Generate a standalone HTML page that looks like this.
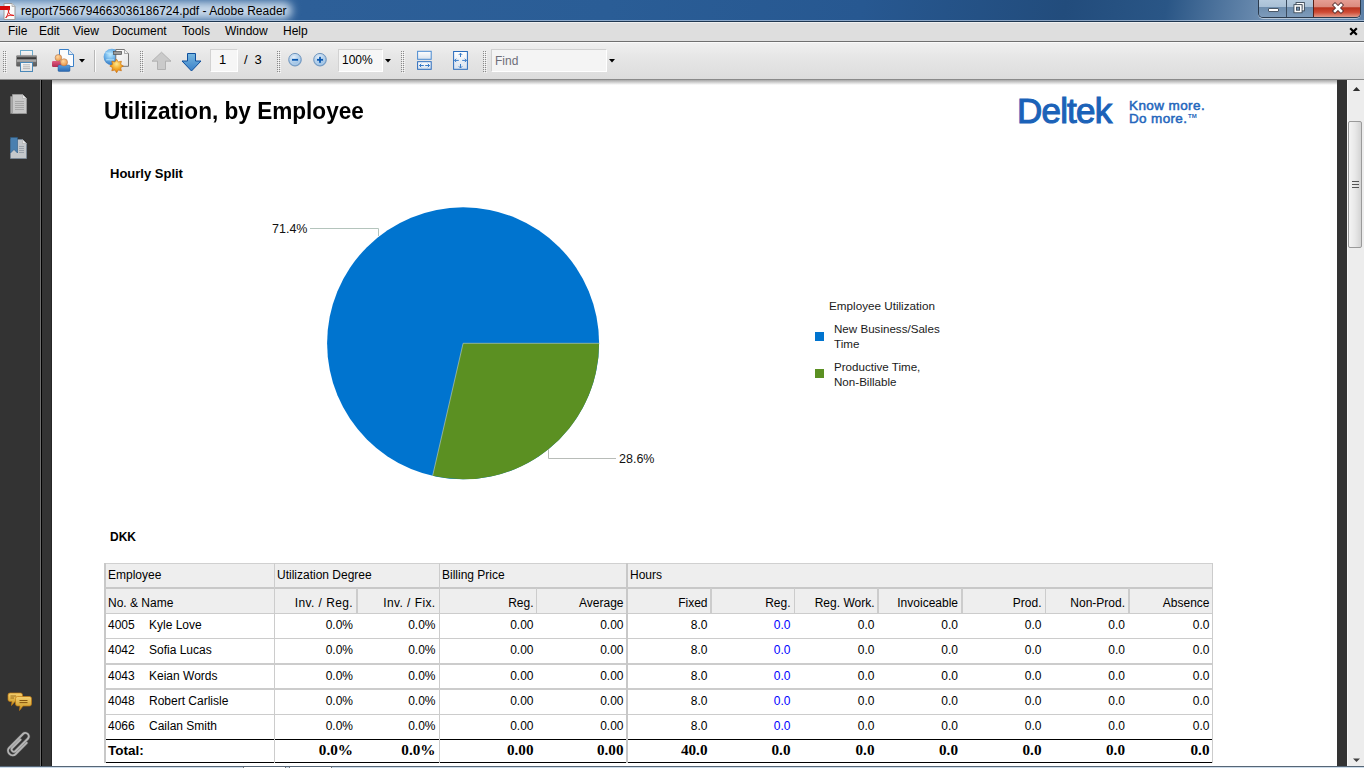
<!DOCTYPE html>
<html><head><meta charset="utf-8">
<style>
*{margin:0;padding:0;box-sizing:border-box}
html,body{width:1364px;height:768px;overflow:hidden;background:#fff;font-family:"Liberation Sans",sans-serif}
.a{position:absolute}
#title{left:0;top:0;width:1364px;height:22px;background:linear-gradient(100deg,#5a86b4 0px,#2d5f98 300px,#2a5d96 600px,#275891 850px,#224c7c 1050px,#2a5686 1150px,#6f8fb2 1250px,#5a7ea6 1364px)}
#menubar{left:0;top:22px;width:1364px;height:20px;background:#dedede;border-top:1px solid #f0f0f0}
#toolbar{left:0;top:42px;width:1364px;height:38px;background:linear-gradient(#f0f0f0,#e6e6e6 40%,#dcdcdc)}
#sidebar{left:0;top:80px;width:52px;height:686px;background:#333}
#page{left:52px;top:80px;width:1285px;height:686px;background:#fff}
#dark2{left:1337px;top:80px;width:10px;height:686px;background:#333}
#vscroll{left:1347px;top:80px;width:17px;height:686px;background:#ededed}
.mi{top:24px;font-size:12px;color:#000}
.t{white-space:nowrap;color:#000}
</style></head><body>
<!-- title bar -->
<div id="title" class="a"></div>
<div class="a" style="left:-20px;top:2px;width:312px;height:17px;background:rgba(212,226,240,0.92);filter:blur(4px);border-radius:8px"></div>
<svg class="a" style="left:0;top:2px" width="16" height="18" viewBox="0 0 16 18">
<path d="M4 1.5 H12 L15 4.5 V17.5 H4 Z" fill="#fafafa" stroke="#9a9a9a" stroke-width="1"/>
<path d="M12 1.5 V4.5 H15" fill="#ddd" stroke="#aaa" stroke-width="0.8"/>
<rect x="0" y="4" width="10" height="4" fill="#d40a0a"/>
<path d="M6 16 C8 12,9 9,9 7 C9 6,8 6,8.3 9 C8.8 12,11 14,14 13.5 C12 12.5,8 13,5.5 15.5" fill="none" stroke="#e02020" stroke-width="1"/>
</svg>
<div class="a t" style="left:21px;top:4px;font-size:12px;">report7566794663036186724.pdf - Adobe Reader</div>
<div class="a" style="left:0;top:20px;width:1364px;height:1px;background:rgba(220,232,245,0.55)"></div><div class="a" style="left:0;top:21px;width:1364px;height:1px;background:#1e3650"></div>
<!-- window buttons -->
<div class="a" style="left:1258px;top:-2px;width:103px;height:20px;border:1px solid #2b3b4e;border-top:none;border-radius:0 0 5px 5px;overflow:hidden;box-shadow:0 1px 0 rgba(255,255,255,0.5)">
 <div class="a" style="left:0;top:0;width:28px;height:19px;background:linear-gradient(#b9cde0 0,#a9c0d6 45%,#6f8eae 50%,#7d9bbb 100%);border-right:1px solid #3a4b5e"></div>
 <div class="a" style="left:28px;top:0;width:26px;height:19px;background:linear-gradient(#b9cde0 0,#a9c0d6 45%,#6f8eae 50%,#7d9bbb 100%)"></div>
 <div class="a" style="left:54px;top:0;width:48px;height:19px;background:linear-gradient(#e8a49a 0,#dc8c7f 45%,#b8341f 52%,#cf4b35 75%,#e09a8a 100%);border-left:1px solid #5a2017"></div>
 <div class="a" style="left:9px;top:10px;width:11px;height:4px;background:#fff;border:1px solid #4a5868;border-radius:1px"></div>
 <svg class="a" style="left:0;top:0" width="54" height="20" viewBox="0 0 54 20">
 <rect x="38.3" y="5.8" width="5.8" height="5.8" fill="none" stroke="#3d4a58" stroke-width="3.4"/>
 <rect x="38.3" y="5.8" width="5.8" height="5.8" fill="none" stroke="#fff" stroke-width="1.6"/>
 <rect x="36.2" y="7.9" width="5.6" height="5.6" fill="#7590ae" stroke="#3d4a58" stroke-width="3.4"/>
 <rect x="36.2" y="7.9" width="5.6" height="5.6" fill="none" stroke="#fff" stroke-width="1.6"/>
 </svg>
 <svg class="a" style="left:71.5px;top:3px" width="14" height="14" viewBox="0 0 14 14"><path d="M4 4 L10 10 M10 4 L4 10" stroke="#5a3434" stroke-width="4.4" stroke-linecap="square"/><path d="M4 4 L10 10 M10 4 L4 10" stroke="#fff" stroke-width="2.6" stroke-linecap="square"/></svg>
</div>
<!-- menu -->
<div id="menubar" class="a"></div>
<div class="a t mi" style="left:8px">File</div>
<div class="a t mi" style="left:39px">Edit</div>
<div class="a t mi" style="left:73px">View</div>
<div class="a t mi" style="left:112px">Document</div>
<div class="a t mi" style="left:182px">Tools</div>
<div class="a t mi" style="left:225px">Window</div>
<div class="a t mi" style="left:283px">Help</div>
<svg class="a" style="left:1349px;top:27px" width="9" height="9" viewBox="0 0 9 9"><path d="M1.2 1.2 L7.8 7.8 M7.8 1.2 L1.2 7.8" stroke="#000" stroke-width="2.2"/></svg>
<!-- toolbar -->
<div id="toolbar" class="a"></div>
<div class="a" style="left:0;top:41px;width:1364px;height:1px;background:#707070"></div><div class="a" style="left:0;top:42px;width:1364px;height:1px;background:#fafafa"></div>
<!-- toolbar items -->

<svg class="a" style="left:14px;top:47px" width="64" height="28" viewBox="14 47 64 28">
 <defs>
  <linearGradient id="pb" x1="0" y1="0" x2="0" y2="1"><stop offset="0" stop-color="#8a8a8a"/><stop offset="1" stop-color="#5a5a5a"/></linearGradient>
  <linearGradient id="pp" x1="0" y1="0" x2="0" y2="1"><stop offset="0" stop-color="#f8f8f8"/><stop offset="1" stop-color="#e0e0e0"/></linearGradient>
  <linearGradient id="bl" x1="0" y1="0" x2="0" y2="1"><stop offset="0" stop-color="#5aa0e0"/><stop offset="1" stop-color="#2a68b0"/></linearGradient>
  <linearGradient id="rd" x1="0" y1="0" x2="0" y2="1"><stop offset="0" stop-color="#e05a80"/><stop offset="1" stop-color="#b02a50"/></linearGradient>
  <radialGradient id="hd" cx="0.4" cy="0.35" r="0.7"><stop offset="0" stop-color="#ffd8a0"/><stop offset="1" stop-color="#e89040"/></radialGradient>
 </defs>
 <rect x="20.5" y="50.5" width="12" height="7" fill="url(#pp)" stroke="#6aa8c8"/>
 <rect x="16.2" y="55.2" width="20.8" height="11.4" rx="1" fill="url(#pb)"/>
 <rect x="17" y="57.3" width="19.2" height="1.8" fill="#3a3a3a"/>
 <rect x="17" y="59.6" width="19.2" height="2.2" fill="#a8a8a8"/>
 <rect x="20.5" y="62.5" width="12" height="9" fill="url(#pp)" stroke="#4a88b8"/>
 <path d="M23 64.8 H30 M23 66.8 H30 M23 68.6 H30" stroke="#b0b0b0" stroke-width="0.9"/>
 <path d="M59.5 49.5 H68.5 L73.5 54.5 V66.5 H59.5 Z" fill="#fbfcfe" stroke="#3a80c8"/>
 <path d="M68.5 49.5 V54.5 H73.5" fill="#dfe8f2" stroke="#3a80c8" stroke-width="0.8"/>
 <rect x="52" y="61" width="9" height="6" rx="1.2" fill="url(#rd)"/>
 <circle cx="58.4" cy="57.8" r="3.3" fill="url(#hd)" stroke="#a87050" stroke-width="0.5"/>
 <rect x="58" y="65" width="12" height="6.5" rx="1.2" fill="url(#bl)" stroke="#2a60a0" stroke-width="0.5"/>
 <circle cx="64" cy="62.3" r="3.6" fill="url(#hd)" stroke="#a87050" stroke-width="0.5"/>
</svg>
<svg class="a" style="left:79px;top:59px" width="6" height="4" viewBox="0 0 6 4"><path d="M0 0 H6 L3 3.5 Z" fill="#000"/></svg>
<div class="a" style="left:94px;top:50px;width:1px;height:22px;background:#b8b8b8"></div>
<div class="a" style="left:95px;top:50px;width:1px;height:22px;background:#fafafa"></div>
<svg class="a" style="left:100px;top:46px" width="32" height="29" viewBox="100 46 32 29">
 <defs>
  <radialGradient id="gl" cx="0.4" cy="0.35" r="0.75"><stop offset="0" stop-color="#c0ecff"/><stop offset="0.45" stop-color="#6ab0e8"/><stop offset="1" stop-color="#1f62b0"/></radialGradient>
  <radialGradient id="st" cx="0.5" cy="0.35" r="0.65"><stop offset="0" stop-color="#ffe890"/><stop offset="0.5" stop-color="#f4b030"/><stop offset="1" stop-color="#e07a08"/></radialGradient>
  <linearGradient id="pg" x1="0" y1="0" x2="1" y2="1"><stop offset="0" stop-color="#ffffff"/><stop offset="1" stop-color="#e4e4e4"/></linearGradient>
 </defs>
 <circle cx="111.8" cy="57" r="8.2" fill="url(#gl)"/>
 <path d="M105.5 53 C108 52,110 55,113 53.5 M106 60 C108.5 58.5,111 61,114 59.5" stroke="#b8e4fa" stroke-width="1.2" fill="none" opacity="0.8"/>
 <path d="M115.8 49.5 H124.5 L128.5 53.5 V66.3 H115.8 Z" fill="url(#pg)" stroke="#6a6a6a" stroke-width="0.9"/>
 <path d="M124.5 49.5 V53.5 H128.5" fill="#f0f0f0" stroke="#8a8a8a" stroke-width="0.7"/>
 <rect x="113.6" y="51.5" width="8" height="3" fill="#9a9a9a" stroke="#505050" stroke-width="0.7"/>
 <path d="M116.60 59.20 L118.28 61.93 L121.41 61.19 L120.67 64.32 L123.40 66.00 L120.67 67.68 L121.41 70.81 L118.28 70.07 L116.60 72.80 L114.92 70.07 L111.79 70.81 L112.53 67.68 L109.80 66.00 L112.53 64.32 L111.79 61.19 L114.92 61.93 Z" fill="url(#st)" stroke="#c86a08" stroke-width="0.6"/>
</svg>

<svg class="a" style="left:151px;top:51px" width="21" height="20" viewBox="0 0 21 20">
 <path d="M10.5 1.2 L20 10.2 H14.5 V18.5 H6.5 V10.2 H1 Z" fill="#cacaca" stroke="#a8a8a8" stroke-width="0.8"/>
</svg>
<svg class="a" style="left:181px;top:52px" width="21" height="21" viewBox="0 0 21 21">
 <defs><linearGradient id="gd" x1="0" y1="0" x2="0" y2="1"><stop offset="0" stop-color="#78b8e0"/><stop offset="1" stop-color="#3a80c8"/></linearGradient></defs>
 <path d="M6.5 1.5 H14.5 V9 H20 L10.5 19 L1 9 H6.5 Z" fill="url(#gd)" stroke="#0e4e9c" stroke-width="1"/>
</svg>
<div class="a" style="left:210px;top:49px;width:28px;height:23px;background:#f6f6f6;border:1px solid #d2d2d2;border-bottom-color:#fff;border-right-color:#fff"></div>
<div class="a t" style="left:219px;top:52px;font-size:13px">1</div>
<div class="a t" style="left:244px;top:52px;font-size:13px">/</div><div class="a t" style="left:254.5px;top:52px;font-size:13px">3</div>

<svg class="a" style="left:286px;top:51px" width="42" height="18" viewBox="0 0 42 18">
 <defs><radialGradient id="gz" cx="0.4" cy="0.3" r="0.8"><stop offset="0" stop-color="#e4f0fa"/><stop offset="1" stop-color="#7aaad8"/></radialGradient></defs>
 <circle cx="9" cy="8.7" r="6.3" fill="url(#gz)" stroke="#7196be" stroke-width="1"/><circle cx="9" cy="8.7" r="4.6" fill="none" stroke="#c8dcf0" stroke-width="0.6"/>
 <rect x="6" y="7.9" width="6" height="1.8" fill="#0a58b0"/>
 <circle cx="34" cy="8.7" r="6.3" fill="url(#gz)" stroke="#7196be" stroke-width="1"/><circle cx="34" cy="8.7" r="4.6" fill="none" stroke="#c8dcf0" stroke-width="0.6"/>
 <rect x="31" y="7.9" width="6" height="1.8" fill="#0a58b0"/>
 <rect x="33.1" y="5.8" width="1.8" height="6" fill="#0a58b0"/>
</svg>
<div class="a" style="left:338px;top:49px;width:45px;height:23px;background:#f6f6f6;border:1px solid #d2d2d2;border-bottom-color:#fff;border-right-color:#fff"></div>
<div class="a t" style="left:342px;top:53px;font-size:12px">100%</div>
<svg class="a" style="left:385px;top:59px" width="6" height="4" viewBox="0 0 6 4"><path d="M0 0 H6 L3 3.5 Z" fill="#000"/></svg>
<svg class="a" style="left:410px;top:46px" width="65" height="28" viewBox="410 46 65 28">
 <defs><linearGradient id="fw" x1="0" y1="0" x2="0" y2="1"><stop offset="0" stop-color="#ffffff"/><stop offset="1" stop-color="#d8e2ee"/></linearGradient></defs>
 <rect x="417.6" y="51.3" width="13.6" height="8" fill="url(#fw)" stroke="#4a8ad0" stroke-width="1"/>
 <rect x="417.6" y="61.7" width="13.6" height="7.6" fill="url(#fw)" stroke="#2a6cbc" stroke-width="1"/>
 <path d="M419.5 65.5 H423.8 M421.2 63.8 L419.5 65.5 L421.2 67.2 M425.2 65.5 H429.5 M427.8 63.8 L429.5 65.5 L427.8 67.2" fill="none" stroke="#3a7cc8" stroke-width="1"/>
 <rect x="453.6" y="51.5" width="13.8" height="17.8" fill="url(#fw)" stroke="#2a6cbc" stroke-width="1"/>
 <path d="M460.5 53.2 V57 M458.8 54.9 L460.5 53.2 L462.2 54.9 M460.5 64 V68 M458.8 66.3 L460.5 68 L462.2 66.3 M454.5 60.4 H458.8 M456.2 58.7 L454.5 60.4 L456.2 62.1 M462.2 60.4 H466.5 M464.8 58.7 L466.5 60.4 L464.8 62.1" fill="none" stroke="#3a7cc8" stroke-width="1"/>
</svg>

<div class="a" style="left:491px;top:49px;width:116px;height:23px;background:#f4f4f4;border:1px solid #d0d0d0;border-bottom-color:#fff;border-right-color:#fff"></div>
<div class="a t" style="left:495px;top:54px;font-size:12px;color:#6e6e78">Find</div>
<svg class="a" style="left:609px;top:59px" width="6" height="4" viewBox="0 0 6 4"><path d="M0 0 H6 L3 3.5 Z" fill="#000"/></svg>
<div class="a" style="left:0;top:79px;width:1364px;height:1px;background:#8a8a8a"></div>
<svg class="a" style="left:0;top:0" width="500" height="80" viewBox="0 0 500 80" shape-rendering="crispEdges"><rect x="4" y="52" width="1" height="1" fill="#fff" opacity="0.7"/><rect x="6" y="52" width="1" height="1" fill="#fff" opacity="0.7"/><rect x="3" y="51" width="1" height="1" fill="#8a8a8a"/><rect x="5" y="51" width="1" height="1" fill="#8a8a8a"/><rect x="4" y="54" width="1" height="1" fill="#fff" opacity="0.7"/><rect x="6" y="54" width="1" height="1" fill="#fff" opacity="0.7"/><rect x="3" y="53" width="1" height="1" fill="#8a8a8a"/><rect x="5" y="53" width="1" height="1" fill="#8a8a8a"/><rect x="4" y="56" width="1" height="1" fill="#fff" opacity="0.7"/><rect x="6" y="56" width="1" height="1" fill="#fff" opacity="0.7"/><rect x="3" y="55" width="1" height="1" fill="#8a8a8a"/><rect x="5" y="55" width="1" height="1" fill="#8a8a8a"/><rect x="4" y="58" width="1" height="1" fill="#fff" opacity="0.7"/><rect x="6" y="58" width="1" height="1" fill="#fff" opacity="0.7"/><rect x="3" y="57" width="1" height="1" fill="#8a8a8a"/><rect x="5" y="57" width="1" height="1" fill="#8a8a8a"/><rect x="4" y="60" width="1" height="1" fill="#fff" opacity="0.7"/><rect x="6" y="60" width="1" height="1" fill="#fff" opacity="0.7"/><rect x="3" y="59" width="1" height="1" fill="#8a8a8a"/><rect x="5" y="59" width="1" height="1" fill="#8a8a8a"/><rect x="4" y="62" width="1" height="1" fill="#fff" opacity="0.7"/><rect x="6" y="62" width="1" height="1" fill="#fff" opacity="0.7"/><rect x="3" y="61" width="1" height="1" fill="#8a8a8a"/><rect x="5" y="61" width="1" height="1" fill="#8a8a8a"/><rect x="4" y="64" width="1" height="1" fill="#fff" opacity="0.7"/><rect x="6" y="64" width="1" height="1" fill="#fff" opacity="0.7"/><rect x="3" y="63" width="1" height="1" fill="#8a8a8a"/><rect x="5" y="63" width="1" height="1" fill="#8a8a8a"/><rect x="4" y="66" width="1" height="1" fill="#fff" opacity="0.7"/><rect x="6" y="66" width="1" height="1" fill="#fff" opacity="0.7"/><rect x="3" y="65" width="1" height="1" fill="#8a8a8a"/><rect x="5" y="65" width="1" height="1" fill="#8a8a8a"/><rect x="4" y="68" width="1" height="1" fill="#fff" opacity="0.7"/><rect x="6" y="68" width="1" height="1" fill="#fff" opacity="0.7"/><rect x="3" y="67" width="1" height="1" fill="#8a8a8a"/><rect x="5" y="67" width="1" height="1" fill="#8a8a8a"/><rect x="4" y="70" width="1" height="1" fill="#fff" opacity="0.7"/><rect x="6" y="70" width="1" height="1" fill="#fff" opacity="0.7"/><rect x="3" y="69" width="1" height="1" fill="#8a8a8a"/><rect x="5" y="69" width="1" height="1" fill="#8a8a8a"/><rect x="4" y="72" width="1" height="1" fill="#fff" opacity="0.7"/><rect x="6" y="72" width="1" height="1" fill="#fff" opacity="0.7"/><rect x="3" y="71" width="1" height="1" fill="#8a8a8a"/><rect x="5" y="71" width="1" height="1" fill="#8a8a8a"/><rect x="141" y="52" width="1" height="1" fill="#fff" opacity="0.7"/><rect x="143" y="52" width="1" height="1" fill="#fff" opacity="0.7"/><rect x="140" y="51" width="1" height="1" fill="#8a8a8a"/><rect x="142" y="51" width="1" height="1" fill="#8a8a8a"/><rect x="141" y="54" width="1" height="1" fill="#fff" opacity="0.7"/><rect x="143" y="54" width="1" height="1" fill="#fff" opacity="0.7"/><rect x="140" y="53" width="1" height="1" fill="#8a8a8a"/><rect x="142" y="53" width="1" height="1" fill="#8a8a8a"/><rect x="141" y="56" width="1" height="1" fill="#fff" opacity="0.7"/><rect x="143" y="56" width="1" height="1" fill="#fff" opacity="0.7"/><rect x="140" y="55" width="1" height="1" fill="#8a8a8a"/><rect x="142" y="55" width="1" height="1" fill="#8a8a8a"/><rect x="141" y="58" width="1" height="1" fill="#fff" opacity="0.7"/><rect x="143" y="58" width="1" height="1" fill="#fff" opacity="0.7"/><rect x="140" y="57" width="1" height="1" fill="#8a8a8a"/><rect x="142" y="57" width="1" height="1" fill="#8a8a8a"/><rect x="141" y="60" width="1" height="1" fill="#fff" opacity="0.7"/><rect x="143" y="60" width="1" height="1" fill="#fff" opacity="0.7"/><rect x="140" y="59" width="1" height="1" fill="#8a8a8a"/><rect x="142" y="59" width="1" height="1" fill="#8a8a8a"/><rect x="141" y="62" width="1" height="1" fill="#fff" opacity="0.7"/><rect x="143" y="62" width="1" height="1" fill="#fff" opacity="0.7"/><rect x="140" y="61" width="1" height="1" fill="#8a8a8a"/><rect x="142" y="61" width="1" height="1" fill="#8a8a8a"/><rect x="141" y="64" width="1" height="1" fill="#fff" opacity="0.7"/><rect x="143" y="64" width="1" height="1" fill="#fff" opacity="0.7"/><rect x="140" y="63" width="1" height="1" fill="#8a8a8a"/><rect x="142" y="63" width="1" height="1" fill="#8a8a8a"/><rect x="141" y="66" width="1" height="1" fill="#fff" opacity="0.7"/><rect x="143" y="66" width="1" height="1" fill="#fff" opacity="0.7"/><rect x="140" y="65" width="1" height="1" fill="#8a8a8a"/><rect x="142" y="65" width="1" height="1" fill="#8a8a8a"/><rect x="141" y="68" width="1" height="1" fill="#fff" opacity="0.7"/><rect x="143" y="68" width="1" height="1" fill="#fff" opacity="0.7"/><rect x="140" y="67" width="1" height="1" fill="#8a8a8a"/><rect x="142" y="67" width="1" height="1" fill="#8a8a8a"/><rect x="141" y="70" width="1" height="1" fill="#fff" opacity="0.7"/><rect x="143" y="70" width="1" height="1" fill="#fff" opacity="0.7"/><rect x="140" y="69" width="1" height="1" fill="#8a8a8a"/><rect x="142" y="69" width="1" height="1" fill="#8a8a8a"/><rect x="141" y="72" width="1" height="1" fill="#fff" opacity="0.7"/><rect x="143" y="72" width="1" height="1" fill="#fff" opacity="0.7"/><rect x="140" y="71" width="1" height="1" fill="#8a8a8a"/><rect x="142" y="71" width="1" height="1" fill="#8a8a8a"/><rect x="278" y="52" width="1" height="1" fill="#fff" opacity="0.7"/><rect x="280" y="52" width="1" height="1" fill="#fff" opacity="0.7"/><rect x="277" y="51" width="1" height="1" fill="#8a8a8a"/><rect x="279" y="51" width="1" height="1" fill="#8a8a8a"/><rect x="278" y="54" width="1" height="1" fill="#fff" opacity="0.7"/><rect x="280" y="54" width="1" height="1" fill="#fff" opacity="0.7"/><rect x="277" y="53" width="1" height="1" fill="#8a8a8a"/><rect x="279" y="53" width="1" height="1" fill="#8a8a8a"/><rect x="278" y="56" width="1" height="1" fill="#fff" opacity="0.7"/><rect x="280" y="56" width="1" height="1" fill="#fff" opacity="0.7"/><rect x="277" y="55" width="1" height="1" fill="#8a8a8a"/><rect x="279" y="55" width="1" height="1" fill="#8a8a8a"/><rect x="278" y="58" width="1" height="1" fill="#fff" opacity="0.7"/><rect x="280" y="58" width="1" height="1" fill="#fff" opacity="0.7"/><rect x="277" y="57" width="1" height="1" fill="#8a8a8a"/><rect x="279" y="57" width="1" height="1" fill="#8a8a8a"/><rect x="278" y="60" width="1" height="1" fill="#fff" opacity="0.7"/><rect x="280" y="60" width="1" height="1" fill="#fff" opacity="0.7"/><rect x="277" y="59" width="1" height="1" fill="#8a8a8a"/><rect x="279" y="59" width="1" height="1" fill="#8a8a8a"/><rect x="278" y="62" width="1" height="1" fill="#fff" opacity="0.7"/><rect x="280" y="62" width="1" height="1" fill="#fff" opacity="0.7"/><rect x="277" y="61" width="1" height="1" fill="#8a8a8a"/><rect x="279" y="61" width="1" height="1" fill="#8a8a8a"/><rect x="278" y="64" width="1" height="1" fill="#fff" opacity="0.7"/><rect x="280" y="64" width="1" height="1" fill="#fff" opacity="0.7"/><rect x="277" y="63" width="1" height="1" fill="#8a8a8a"/><rect x="279" y="63" width="1" height="1" fill="#8a8a8a"/><rect x="278" y="66" width="1" height="1" fill="#fff" opacity="0.7"/><rect x="280" y="66" width="1" height="1" fill="#fff" opacity="0.7"/><rect x="277" y="65" width="1" height="1" fill="#8a8a8a"/><rect x="279" y="65" width="1" height="1" fill="#8a8a8a"/><rect x="278" y="68" width="1" height="1" fill="#fff" opacity="0.7"/><rect x="280" y="68" width="1" height="1" fill="#fff" opacity="0.7"/><rect x="277" y="67" width="1" height="1" fill="#8a8a8a"/><rect x="279" y="67" width="1" height="1" fill="#8a8a8a"/><rect x="278" y="70" width="1" height="1" fill="#fff" opacity="0.7"/><rect x="280" y="70" width="1" height="1" fill="#fff" opacity="0.7"/><rect x="277" y="69" width="1" height="1" fill="#8a8a8a"/><rect x="279" y="69" width="1" height="1" fill="#8a8a8a"/><rect x="278" y="72" width="1" height="1" fill="#fff" opacity="0.7"/><rect x="280" y="72" width="1" height="1" fill="#fff" opacity="0.7"/><rect x="277" y="71" width="1" height="1" fill="#8a8a8a"/><rect x="279" y="71" width="1" height="1" fill="#8a8a8a"/><rect x="402" y="52" width="1" height="1" fill="#fff" opacity="0.7"/><rect x="404" y="52" width="1" height="1" fill="#fff" opacity="0.7"/><rect x="401" y="51" width="1" height="1" fill="#8a8a8a"/><rect x="403" y="51" width="1" height="1" fill="#8a8a8a"/><rect x="402" y="54" width="1" height="1" fill="#fff" opacity="0.7"/><rect x="404" y="54" width="1" height="1" fill="#fff" opacity="0.7"/><rect x="401" y="53" width="1" height="1" fill="#8a8a8a"/><rect x="403" y="53" width="1" height="1" fill="#8a8a8a"/><rect x="402" y="56" width="1" height="1" fill="#fff" opacity="0.7"/><rect x="404" y="56" width="1" height="1" fill="#fff" opacity="0.7"/><rect x="401" y="55" width="1" height="1" fill="#8a8a8a"/><rect x="403" y="55" width="1" height="1" fill="#8a8a8a"/><rect x="402" y="58" width="1" height="1" fill="#fff" opacity="0.7"/><rect x="404" y="58" width="1" height="1" fill="#fff" opacity="0.7"/><rect x="401" y="57" width="1" height="1" fill="#8a8a8a"/><rect x="403" y="57" width="1" height="1" fill="#8a8a8a"/><rect x="402" y="60" width="1" height="1" fill="#fff" opacity="0.7"/><rect x="404" y="60" width="1" height="1" fill="#fff" opacity="0.7"/><rect x="401" y="59" width="1" height="1" fill="#8a8a8a"/><rect x="403" y="59" width="1" height="1" fill="#8a8a8a"/><rect x="402" y="62" width="1" height="1" fill="#fff" opacity="0.7"/><rect x="404" y="62" width="1" height="1" fill="#fff" opacity="0.7"/><rect x="401" y="61" width="1" height="1" fill="#8a8a8a"/><rect x="403" y="61" width="1" height="1" fill="#8a8a8a"/><rect x="402" y="64" width="1" height="1" fill="#fff" opacity="0.7"/><rect x="404" y="64" width="1" height="1" fill="#fff" opacity="0.7"/><rect x="401" y="63" width="1" height="1" fill="#8a8a8a"/><rect x="403" y="63" width="1" height="1" fill="#8a8a8a"/><rect x="402" y="66" width="1" height="1" fill="#fff" opacity="0.7"/><rect x="404" y="66" width="1" height="1" fill="#fff" opacity="0.7"/><rect x="401" y="65" width="1" height="1" fill="#8a8a8a"/><rect x="403" y="65" width="1" height="1" fill="#8a8a8a"/><rect x="402" y="68" width="1" height="1" fill="#fff" opacity="0.7"/><rect x="404" y="68" width="1" height="1" fill="#fff" opacity="0.7"/><rect x="401" y="67" width="1" height="1" fill="#8a8a8a"/><rect x="403" y="67" width="1" height="1" fill="#8a8a8a"/><rect x="402" y="70" width="1" height="1" fill="#fff" opacity="0.7"/><rect x="404" y="70" width="1" height="1" fill="#fff" opacity="0.7"/><rect x="401" y="69" width="1" height="1" fill="#8a8a8a"/><rect x="403" y="69" width="1" height="1" fill="#8a8a8a"/><rect x="402" y="72" width="1" height="1" fill="#fff" opacity="0.7"/><rect x="404" y="72" width="1" height="1" fill="#fff" opacity="0.7"/><rect x="401" y="71" width="1" height="1" fill="#8a8a8a"/><rect x="403" y="71" width="1" height="1" fill="#8a8a8a"/><rect x="484" y="52" width="1" height="1" fill="#fff" opacity="0.7"/><rect x="486" y="52" width="1" height="1" fill="#fff" opacity="0.7"/><rect x="483" y="51" width="1" height="1" fill="#8a8a8a"/><rect x="485" y="51" width="1" height="1" fill="#8a8a8a"/><rect x="484" y="54" width="1" height="1" fill="#fff" opacity="0.7"/><rect x="486" y="54" width="1" height="1" fill="#fff" opacity="0.7"/><rect x="483" y="53" width="1" height="1" fill="#8a8a8a"/><rect x="485" y="53" width="1" height="1" fill="#8a8a8a"/><rect x="484" y="56" width="1" height="1" fill="#fff" opacity="0.7"/><rect x="486" y="56" width="1" height="1" fill="#fff" opacity="0.7"/><rect x="483" y="55" width="1" height="1" fill="#8a8a8a"/><rect x="485" y="55" width="1" height="1" fill="#8a8a8a"/><rect x="484" y="58" width="1" height="1" fill="#fff" opacity="0.7"/><rect x="486" y="58" width="1" height="1" fill="#fff" opacity="0.7"/><rect x="483" y="57" width="1" height="1" fill="#8a8a8a"/><rect x="485" y="57" width="1" height="1" fill="#8a8a8a"/><rect x="484" y="60" width="1" height="1" fill="#fff" opacity="0.7"/><rect x="486" y="60" width="1" height="1" fill="#fff" opacity="0.7"/><rect x="483" y="59" width="1" height="1" fill="#8a8a8a"/><rect x="485" y="59" width="1" height="1" fill="#8a8a8a"/><rect x="484" y="62" width="1" height="1" fill="#fff" opacity="0.7"/><rect x="486" y="62" width="1" height="1" fill="#fff" opacity="0.7"/><rect x="483" y="61" width="1" height="1" fill="#8a8a8a"/><rect x="485" y="61" width="1" height="1" fill="#8a8a8a"/><rect x="484" y="64" width="1" height="1" fill="#fff" opacity="0.7"/><rect x="486" y="64" width="1" height="1" fill="#fff" opacity="0.7"/><rect x="483" y="63" width="1" height="1" fill="#8a8a8a"/><rect x="485" y="63" width="1" height="1" fill="#8a8a8a"/><rect x="484" y="66" width="1" height="1" fill="#fff" opacity="0.7"/><rect x="486" y="66" width="1" height="1" fill="#fff" opacity="0.7"/><rect x="483" y="65" width="1" height="1" fill="#8a8a8a"/><rect x="485" y="65" width="1" height="1" fill="#8a8a8a"/><rect x="484" y="68" width="1" height="1" fill="#fff" opacity="0.7"/><rect x="486" y="68" width="1" height="1" fill="#fff" opacity="0.7"/><rect x="483" y="67" width="1" height="1" fill="#8a8a8a"/><rect x="485" y="67" width="1" height="1" fill="#8a8a8a"/><rect x="484" y="70" width="1" height="1" fill="#fff" opacity="0.7"/><rect x="486" y="70" width="1" height="1" fill="#fff" opacity="0.7"/><rect x="483" y="69" width="1" height="1" fill="#8a8a8a"/><rect x="485" y="69" width="1" height="1" fill="#8a8a8a"/><rect x="484" y="72" width="1" height="1" fill="#fff" opacity="0.7"/><rect x="486" y="72" width="1" height="1" fill="#fff" opacity="0.7"/><rect x="483" y="71" width="1" height="1" fill="#8a8a8a"/><rect x="485" y="71" width="1" height="1" fill="#8a8a8a"/></svg>
<!-- content -->
<div id="sidebar" class="a"></div>
<div id="page" class="a"></div>
<div id="dark2" class="a"></div>
<div id="vscroll" class="a"></div>

<!-- PAGE CONTENT -->
<div class="a t" style="left:104px;top:101.37px;font-size:22.6px;line-height:22.6px;font-weight:bold;font-family:'Liberation Sans',sans-serif;color:#000;transform:scaleY(1.07);transform-origin:0 19px;">Utilization, by Employee</div>
<div class="a t" style="left:1017px;top:92.87px;font-size:35px;line-height:35px;font-weight:normal;font-family:'Liberation Sans',sans-serif;color:#1b62b8;letter-spacing:-0.8px;-webkit-text-stroke:1.1px #1b62b8;">Deltek</div>
<div class="a t" style="left:1129px;top:98.57px;font-size:13.5px;line-height:13.5px;font-weight:normal;font-family:'Liberation Sans',sans-serif;color:#2366bc;letter-spacing:0.4px;-webkit-text-stroke:0.5px #2366bc;">Know more.</div>
<div class="a t" style="left:1129px;top:111.97px;font-size:13.5px;line-height:13.5px;font-weight:normal;font-family:'Liberation Sans',sans-serif;color:#2366bc;letter-spacing:0.35px;-webkit-text-stroke:0.5px #2366bc;">Do more.</div>
<div class="a t" style="left:1188px;top:112.92px;font-size:6px;line-height:6px;font-weight:bold;font-family:'Liberation Sans',sans-serif;color:#2366bc;">TM</div>
<div class="a t" style="left:110px;top:167.0px;font-size:13px;line-height:13px;font-weight:bold;font-family:'Liberation Sans',sans-serif;color:#000;">Hourly Split</div>
<svg class="a" style="left:0;top:0" width="1364" height="768" viewBox="0 0 1364 768">
<circle cx="463.1" cy="343.3" r="136" fill="#0074cf"/>
<path d="M463.1 343.3 L599.1 343.3 A136 136 0 0 1 432.60 475.84 Z" fill="#5b9022"/>
<path d="M599.1 343.3 L463.1 343.3 L432.60 475.84" fill="none" stroke="#c8d0c0" stroke-width="0.6"/>
<path d="M310 228.5 H378.5 V236" fill="none" stroke="#b4c4bc" stroke-width="1"/>
<path d="M548.5 449 V458.5 H616" fill="none" stroke="#b8bcb8" stroke-width="1"/>
</svg>
<div class="a t" style="left:272px;top:223.42px;font-size:12.5px;line-height:12.5px;font-weight:normal;font-family:'Liberation Sans',sans-serif;color:#111;">71.4%</div>
<div class="a t" style="left:619px;top:453.42px;font-size:12.5px;line-height:12.5px;font-weight:normal;font-family:'Liberation Sans',sans-serif;color:#111;">28.6%</div>
<div class="a t" style="left:829px;top:300.1px;font-size:11.7px;line-height:11.7px;font-weight:normal;font-family:'Liberation Sans',sans-serif;color:#1a1a1a;">Employee Utilization</div>
<div class="a" style="left:815px;top:332px;width:9px;height:9px;background:#0074cf"></div>
<div class="a t" style="left:834px;top:323.18px;font-size:11.6px;line-height:11.6px;font-weight:normal;font-family:'Liberation Sans',sans-serif;color:#1a1a1a;">New Business/Sales</div>
<div class="a t" style="left:834px;top:338.18px;font-size:11.6px;line-height:11.6px;font-weight:normal;font-family:'Liberation Sans',sans-serif;color:#1a1a1a;">Time</div>
<div class="a" style="left:815px;top:369px;width:9px;height:9px;background:#5b9022"></div>
<div class="a t" style="left:834px;top:360.68px;font-size:11.6px;line-height:11.6px;font-weight:normal;font-family:'Liberation Sans',sans-serif;color:#1a1a1a;">Productive Time,</div>
<div class="a t" style="left:834px;top:375.68px;font-size:11.6px;line-height:11.6px;font-weight:normal;font-family:'Liberation Sans',sans-serif;color:#1a1a1a;">Non-Billable</div>
<div class="a t" style="left:110px;top:530.84px;font-size:12px;line-height:12px;font-weight:bold;font-family:'Liberation Sans',sans-serif;color:#000;">DKK</div>
<div class="a" style="left:104px;top:563px;width:1108px;height:50px;background:#eeeeee"></div>
<div class="a" style="left:104px;top:563px;width:1108px;height:1px;background:#d0d0d0"></div>
<div class="a" style="left:104px;top:587px;width:1108px;height:2px;background:#c8c8c8"></div>
<div class="a" style="left:104px;top:613px;width:1108px;height:1px;background:#cccccc"></div>
<div class="a" style="left:104px;top:638px;width:1108px;height:1px;background:#cccccc"></div>
<div class="a" style="left:104px;top:663px;width:1108px;height:2px;background:#cccccc"></div>
<div class="a" style="left:104px;top:688px;width:1108px;height:2px;background:#cccccc"></div>
<div class="a" style="left:104px;top:714px;width:1108px;height:1px;background:#cccccc"></div>
<div class="a" style="left:104px;top:739px;width:1108px;height:1px;background:#000"></div>
<div class="a" style="left:104px;top:762px;width:1108px;height:1px;background:#000"></div>
<div class="a" style="left:104px;top:563px;width:2px;height:200px;background:#c8c8c8"></div>
<div class="a" style="left:1212px;top:563px;width:1px;height:200px;background:#cccccc"></div>
<div class="a" style="left:274px;top:563px;width:1px;height:200px;background:#cccccc"></div>
<div class="a" style="left:439px;top:563px;width:1px;height:200px;background:#cccccc"></div>
<div class="a" style="left:626px;top:563px;width:2px;height:200px;background:#c8c8c8"></div>
<div class="a" style="left:356px;top:588px;width:2px;height:25px;background:#cccccc"></div>
<div class="a" style="left:536px;top:588px;width:1px;height:25px;background:#cccccc"></div>
<div class="a" style="left:710px;top:588px;width:2px;height:25px;background:#cccccc"></div>
<div class="a" style="left:794px;top:588px;width:1px;height:25px;background:#cccccc"></div>
<div class="a" style="left:877px;top:588px;width:2px;height:25px;background:#cccccc"></div>
<div class="a" style="left:961px;top:588px;width:2px;height:25px;background:#cccccc"></div>
<div class="a" style="left:1045px;top:588px;width:1px;height:25px;background:#cccccc"></div>
<div class="a" style="left:1128px;top:588px;width:2px;height:25px;background:#cccccc"></div>
<div class="a t" style="left:108px;top:568.84px;font-size:12px;line-height:12px;font-weight:normal;font-family:'Liberation Sans',sans-serif;color:#000;">Employee</div>
<div class="a t" style="left:277px;top:568.84px;font-size:12px;line-height:12px;font-weight:normal;font-family:'Liberation Sans',sans-serif;color:#000;">Utilization Degree</div>
<div class="a t" style="left:442px;top:568.84px;font-size:12px;line-height:12px;font-weight:normal;font-family:'Liberation Sans',sans-serif;color:#000;">Billing Price</div>
<div class="a t" style="left:630px;top:568.84px;font-size:12px;line-height:12px;font-weight:normal;font-family:'Liberation Sans',sans-serif;color:#000;">Hours</div>
<div class="a t" style="left:108px;top:596.84px;font-size:12px;line-height:12px;font-weight:normal;font-family:'Liberation Sans',sans-serif;color:#000;">No. &amp; Name</div>
<div class="a t" style="left:-47px;width:400px;text-align:right;top:596.84px;font-size:12px;line-height:12px;font-weight:normal;font-family:'Liberation Sans',sans-serif;color:#000;word-spacing:0.3px;letter-spacing:0.35px;margin-right:-0.5px;">Inv. / Reg.</div>
<div class="a t" style="left:35.5px;width:400px;text-align:right;top:596.84px;font-size:12px;line-height:12px;font-weight:normal;font-family:'Liberation Sans',sans-serif;color:#000;word-spacing:0.3px;letter-spacing:0.35px;margin-right:-0.5px;">Inv. / Fix.</div>
<div class="a t" style="left:133.5px;width:400px;text-align:right;top:596.84px;font-size:12px;line-height:12px;font-weight:normal;font-family:'Liberation Sans',sans-serif;color:#000;">Reg.</div>
<div class="a t" style="left:223.5px;width:400px;text-align:right;top:596.84px;font-size:12px;line-height:12px;font-weight:normal;font-family:'Liberation Sans',sans-serif;color:#000;">Average</div>
<div class="a t" style="left:307.5px;width:400px;text-align:right;top:596.84px;font-size:12px;line-height:12px;font-weight:normal;font-family:'Liberation Sans',sans-serif;color:#000;">Fixed</div>
<div class="a t" style="left:390.5px;width:400px;text-align:right;top:596.84px;font-size:12px;line-height:12px;font-weight:normal;font-family:'Liberation Sans',sans-serif;color:#000;">Reg.</div>
<div class="a t" style="left:474.5px;width:400px;text-align:right;top:596.84px;font-size:12px;line-height:12px;font-weight:normal;font-family:'Liberation Sans',sans-serif;color:#000;">Reg. Work.</div>
<div class="a t" style="left:558px;width:400px;text-align:right;top:596.84px;font-size:12px;line-height:12px;font-weight:normal;font-family:'Liberation Sans',sans-serif;color:#000;">Invoiceable</div>
<div class="a t" style="left:641.5px;width:400px;text-align:right;top:596.84px;font-size:12px;line-height:12px;font-weight:normal;font-family:'Liberation Sans',sans-serif;color:#000;">Prod.</div>
<div class="a t" style="left:725px;width:400px;text-align:right;top:596.84px;font-size:12px;line-height:12px;font-weight:normal;font-family:'Liberation Sans',sans-serif;color:#000;">Non-Prod.</div>
<div class="a t" style="left:809.5px;width:400px;text-align:right;top:596.84px;font-size:12px;line-height:12px;font-weight:normal;font-family:'Liberation Sans',sans-serif;color:#000;">Absence</div>
<div class="a t" style="left:108px;top:618.84px;font-size:12px;line-height:12px;font-weight:normal;font-family:'Liberation Sans',sans-serif;color:#000;">4005</div>
<div class="a t" style="left:149px;top:618.84px;font-size:12px;line-height:12px;font-weight:normal;font-family:'Liberation Sans',sans-serif;color:#000;">Kyle Love</div>
<div class="a t" style="left:-47px;width:400px;text-align:right;top:618.84px;font-size:12px;line-height:12px;font-weight:normal;font-family:'Liberation Sans',sans-serif;color:#000;">0.0%</div>
<div class="a t" style="left:35.5px;width:400px;text-align:right;top:618.84px;font-size:12px;line-height:12px;font-weight:normal;font-family:'Liberation Sans',sans-serif;color:#000;">0.0%</div>
<div class="a t" style="left:133.5px;width:400px;text-align:right;top:618.84px;font-size:12px;line-height:12px;font-weight:normal;font-family:'Liberation Sans',sans-serif;color:#000;">0.00</div>
<div class="a t" style="left:223.5px;width:400px;text-align:right;top:618.84px;font-size:12px;line-height:12px;font-weight:normal;font-family:'Liberation Sans',sans-serif;color:#000;">0.00</div>
<div class="a t" style="left:307.5px;width:400px;text-align:right;top:618.84px;font-size:12px;line-height:12px;font-weight:normal;font-family:'Liberation Sans',sans-serif;color:#000;">8.0</div>
<div class="a t" style="left:390.5px;width:400px;text-align:right;top:618.84px;font-size:12px;line-height:12px;font-weight:normal;font-family:'Liberation Sans',sans-serif;color:#0000ff;">0.0</div>
<div class="a t" style="left:474.5px;width:400px;text-align:right;top:618.84px;font-size:12px;line-height:12px;font-weight:normal;font-family:'Liberation Sans',sans-serif;color:#000;">0.0</div>
<div class="a t" style="left:558px;width:400px;text-align:right;top:618.84px;font-size:12px;line-height:12px;font-weight:normal;font-family:'Liberation Sans',sans-serif;color:#000;">0.0</div>
<div class="a t" style="left:641.5px;width:400px;text-align:right;top:618.84px;font-size:12px;line-height:12px;font-weight:normal;font-family:'Liberation Sans',sans-serif;color:#000;">0.0</div>
<div class="a t" style="left:725px;width:400px;text-align:right;top:618.84px;font-size:12px;line-height:12px;font-weight:normal;font-family:'Liberation Sans',sans-serif;color:#000;">0.0</div>
<div class="a t" style="left:809.5px;width:400px;text-align:right;top:618.84px;font-size:12px;line-height:12px;font-weight:normal;font-family:'Liberation Sans',sans-serif;color:#000;">0.0</div>
<div class="a t" style="left:108px;top:643.84px;font-size:12px;line-height:12px;font-weight:normal;font-family:'Liberation Sans',sans-serif;color:#000;">4042</div>
<div class="a t" style="left:149px;top:643.84px;font-size:12px;line-height:12px;font-weight:normal;font-family:'Liberation Sans',sans-serif;color:#000;">Sofia Lucas</div>
<div class="a t" style="left:-47px;width:400px;text-align:right;top:643.84px;font-size:12px;line-height:12px;font-weight:normal;font-family:'Liberation Sans',sans-serif;color:#000;">0.0%</div>
<div class="a t" style="left:35.5px;width:400px;text-align:right;top:643.84px;font-size:12px;line-height:12px;font-weight:normal;font-family:'Liberation Sans',sans-serif;color:#000;">0.0%</div>
<div class="a t" style="left:133.5px;width:400px;text-align:right;top:643.84px;font-size:12px;line-height:12px;font-weight:normal;font-family:'Liberation Sans',sans-serif;color:#000;">0.00</div>
<div class="a t" style="left:223.5px;width:400px;text-align:right;top:643.84px;font-size:12px;line-height:12px;font-weight:normal;font-family:'Liberation Sans',sans-serif;color:#000;">0.00</div>
<div class="a t" style="left:307.5px;width:400px;text-align:right;top:643.84px;font-size:12px;line-height:12px;font-weight:normal;font-family:'Liberation Sans',sans-serif;color:#000;">8.0</div>
<div class="a t" style="left:390.5px;width:400px;text-align:right;top:643.84px;font-size:12px;line-height:12px;font-weight:normal;font-family:'Liberation Sans',sans-serif;color:#0000ff;">0.0</div>
<div class="a t" style="left:474.5px;width:400px;text-align:right;top:643.84px;font-size:12px;line-height:12px;font-weight:normal;font-family:'Liberation Sans',sans-serif;color:#000;">0.0</div>
<div class="a t" style="left:558px;width:400px;text-align:right;top:643.84px;font-size:12px;line-height:12px;font-weight:normal;font-family:'Liberation Sans',sans-serif;color:#000;">0.0</div>
<div class="a t" style="left:641.5px;width:400px;text-align:right;top:643.84px;font-size:12px;line-height:12px;font-weight:normal;font-family:'Liberation Sans',sans-serif;color:#000;">0.0</div>
<div class="a t" style="left:725px;width:400px;text-align:right;top:643.84px;font-size:12px;line-height:12px;font-weight:normal;font-family:'Liberation Sans',sans-serif;color:#000;">0.0</div>
<div class="a t" style="left:809.5px;width:400px;text-align:right;top:643.84px;font-size:12px;line-height:12px;font-weight:normal;font-family:'Liberation Sans',sans-serif;color:#000;">0.0</div>
<div class="a t" style="left:108px;top:669.84px;font-size:12px;line-height:12px;font-weight:normal;font-family:'Liberation Sans',sans-serif;color:#000;">4043</div>
<div class="a t" style="left:149px;top:669.84px;font-size:12px;line-height:12px;font-weight:normal;font-family:'Liberation Sans',sans-serif;color:#000;">Keian Words</div>
<div class="a t" style="left:-47px;width:400px;text-align:right;top:669.84px;font-size:12px;line-height:12px;font-weight:normal;font-family:'Liberation Sans',sans-serif;color:#000;">0.0%</div>
<div class="a t" style="left:35.5px;width:400px;text-align:right;top:669.84px;font-size:12px;line-height:12px;font-weight:normal;font-family:'Liberation Sans',sans-serif;color:#000;">0.0%</div>
<div class="a t" style="left:133.5px;width:400px;text-align:right;top:669.84px;font-size:12px;line-height:12px;font-weight:normal;font-family:'Liberation Sans',sans-serif;color:#000;">0.00</div>
<div class="a t" style="left:223.5px;width:400px;text-align:right;top:669.84px;font-size:12px;line-height:12px;font-weight:normal;font-family:'Liberation Sans',sans-serif;color:#000;">0.00</div>
<div class="a t" style="left:307.5px;width:400px;text-align:right;top:669.84px;font-size:12px;line-height:12px;font-weight:normal;font-family:'Liberation Sans',sans-serif;color:#000;">8.0</div>
<div class="a t" style="left:390.5px;width:400px;text-align:right;top:669.84px;font-size:12px;line-height:12px;font-weight:normal;font-family:'Liberation Sans',sans-serif;color:#0000ff;">0.0</div>
<div class="a t" style="left:474.5px;width:400px;text-align:right;top:669.84px;font-size:12px;line-height:12px;font-weight:normal;font-family:'Liberation Sans',sans-serif;color:#000;">0.0</div>
<div class="a t" style="left:558px;width:400px;text-align:right;top:669.84px;font-size:12px;line-height:12px;font-weight:normal;font-family:'Liberation Sans',sans-serif;color:#000;">0.0</div>
<div class="a t" style="left:641.5px;width:400px;text-align:right;top:669.84px;font-size:12px;line-height:12px;font-weight:normal;font-family:'Liberation Sans',sans-serif;color:#000;">0.0</div>
<div class="a t" style="left:725px;width:400px;text-align:right;top:669.84px;font-size:12px;line-height:12px;font-weight:normal;font-family:'Liberation Sans',sans-serif;color:#000;">0.0</div>
<div class="a t" style="left:809.5px;width:400px;text-align:right;top:669.84px;font-size:12px;line-height:12px;font-weight:normal;font-family:'Liberation Sans',sans-serif;color:#000;">0.0</div>
<div class="a t" style="left:108px;top:694.84px;font-size:12px;line-height:12px;font-weight:normal;font-family:'Liberation Sans',sans-serif;color:#000;">4048</div>
<div class="a t" style="left:149px;top:694.84px;font-size:12px;line-height:12px;font-weight:normal;font-family:'Liberation Sans',sans-serif;color:#000;">Robert Carlisle</div>
<div class="a t" style="left:-47px;width:400px;text-align:right;top:694.84px;font-size:12px;line-height:12px;font-weight:normal;font-family:'Liberation Sans',sans-serif;color:#000;">0.0%</div>
<div class="a t" style="left:35.5px;width:400px;text-align:right;top:694.84px;font-size:12px;line-height:12px;font-weight:normal;font-family:'Liberation Sans',sans-serif;color:#000;">0.0%</div>
<div class="a t" style="left:133.5px;width:400px;text-align:right;top:694.84px;font-size:12px;line-height:12px;font-weight:normal;font-family:'Liberation Sans',sans-serif;color:#000;">0.00</div>
<div class="a t" style="left:223.5px;width:400px;text-align:right;top:694.84px;font-size:12px;line-height:12px;font-weight:normal;font-family:'Liberation Sans',sans-serif;color:#000;">0.00</div>
<div class="a t" style="left:307.5px;width:400px;text-align:right;top:694.84px;font-size:12px;line-height:12px;font-weight:normal;font-family:'Liberation Sans',sans-serif;color:#000;">8.0</div>
<div class="a t" style="left:390.5px;width:400px;text-align:right;top:694.84px;font-size:12px;line-height:12px;font-weight:normal;font-family:'Liberation Sans',sans-serif;color:#0000ff;">0.0</div>
<div class="a t" style="left:474.5px;width:400px;text-align:right;top:694.84px;font-size:12px;line-height:12px;font-weight:normal;font-family:'Liberation Sans',sans-serif;color:#000;">0.0</div>
<div class="a t" style="left:558px;width:400px;text-align:right;top:694.84px;font-size:12px;line-height:12px;font-weight:normal;font-family:'Liberation Sans',sans-serif;color:#000;">0.0</div>
<div class="a t" style="left:641.5px;width:400px;text-align:right;top:694.84px;font-size:12px;line-height:12px;font-weight:normal;font-family:'Liberation Sans',sans-serif;color:#000;">0.0</div>
<div class="a t" style="left:725px;width:400px;text-align:right;top:694.84px;font-size:12px;line-height:12px;font-weight:normal;font-family:'Liberation Sans',sans-serif;color:#000;">0.0</div>
<div class="a t" style="left:809.5px;width:400px;text-align:right;top:694.84px;font-size:12px;line-height:12px;font-weight:normal;font-family:'Liberation Sans',sans-serif;color:#000;">0.0</div>
<div class="a t" style="left:108px;top:719.84px;font-size:12px;line-height:12px;font-weight:normal;font-family:'Liberation Sans',sans-serif;color:#000;">4066</div>
<div class="a t" style="left:149px;top:719.84px;font-size:12px;line-height:12px;font-weight:normal;font-family:'Liberation Sans',sans-serif;color:#000;">Cailan Smith</div>
<div class="a t" style="left:-47px;width:400px;text-align:right;top:719.84px;font-size:12px;line-height:12px;font-weight:normal;font-family:'Liberation Sans',sans-serif;color:#000;">0.0%</div>
<div class="a t" style="left:35.5px;width:400px;text-align:right;top:719.84px;font-size:12px;line-height:12px;font-weight:normal;font-family:'Liberation Sans',sans-serif;color:#000;">0.0%</div>
<div class="a t" style="left:133.5px;width:400px;text-align:right;top:719.84px;font-size:12px;line-height:12px;font-weight:normal;font-family:'Liberation Sans',sans-serif;color:#000;">0.00</div>
<div class="a t" style="left:223.5px;width:400px;text-align:right;top:719.84px;font-size:12px;line-height:12px;font-weight:normal;font-family:'Liberation Sans',sans-serif;color:#000;">0.00</div>
<div class="a t" style="left:307.5px;width:400px;text-align:right;top:719.84px;font-size:12px;line-height:12px;font-weight:normal;font-family:'Liberation Sans',sans-serif;color:#000;">8.0</div>
<div class="a t" style="left:390.5px;width:400px;text-align:right;top:719.84px;font-size:12px;line-height:12px;font-weight:normal;font-family:'Liberation Sans',sans-serif;color:#0000ff;">0.0</div>
<div class="a t" style="left:474.5px;width:400px;text-align:right;top:719.84px;font-size:12px;line-height:12px;font-weight:normal;font-family:'Liberation Sans',sans-serif;color:#000;">0.0</div>
<div class="a t" style="left:558px;width:400px;text-align:right;top:719.84px;font-size:12px;line-height:12px;font-weight:normal;font-family:'Liberation Sans',sans-serif;color:#000;">0.0</div>
<div class="a t" style="left:641.5px;width:400px;text-align:right;top:719.84px;font-size:12px;line-height:12px;font-weight:normal;font-family:'Liberation Sans',sans-serif;color:#000;">0.0</div>
<div class="a t" style="left:725px;width:400px;text-align:right;top:719.84px;font-size:12px;line-height:12px;font-weight:normal;font-family:'Liberation Sans',sans-serif;color:#000;">0.0</div>
<div class="a t" style="left:809.5px;width:400px;text-align:right;top:719.84px;font-size:12px;line-height:12px;font-weight:normal;font-family:'Liberation Sans',sans-serif;color:#000;">0.0</div>
<div class="a t" style="left:108px;top:743.57px;font-size:13.5px;line-height:13.5px;font-weight:bold;font-family:'Liberation Sans',sans-serif;color:#000;">Total:</div>
<div class="a t" style="left:-47px;width:400px;text-align:right;top:742.27px;font-size:15.2px;line-height:15.2px;font-weight:bold;font-family:'Liberation Serif',serif;color:#000;">0.0%</div>
<div class="a t" style="left:35.5px;width:400px;text-align:right;top:742.27px;font-size:15.2px;line-height:15.2px;font-weight:bold;font-family:'Liberation Serif',serif;color:#000;">0.0%</div>
<div class="a t" style="left:133.5px;width:400px;text-align:right;top:742.27px;font-size:15.2px;line-height:15.2px;font-weight:bold;font-family:'Liberation Serif',serif;color:#000;">0.00</div>
<div class="a t" style="left:223.5px;width:400px;text-align:right;top:742.27px;font-size:15.2px;line-height:15.2px;font-weight:bold;font-family:'Liberation Serif',serif;color:#000;">0.00</div>
<div class="a t" style="left:307.5px;width:400px;text-align:right;top:742.27px;font-size:15.2px;line-height:15.2px;font-weight:bold;font-family:'Liberation Serif',serif;color:#000;">40.0</div>
<div class="a t" style="left:390.5px;width:400px;text-align:right;top:742.27px;font-size:15.2px;line-height:15.2px;font-weight:bold;font-family:'Liberation Serif',serif;color:#000;">0.0</div>
<div class="a t" style="left:474.5px;width:400px;text-align:right;top:742.27px;font-size:15.2px;line-height:15.2px;font-weight:bold;font-family:'Liberation Serif',serif;color:#000;">0.0</div>
<div class="a t" style="left:558px;width:400px;text-align:right;top:742.27px;font-size:15.2px;line-height:15.2px;font-weight:bold;font-family:'Liberation Serif',serif;color:#000;">0.0</div>
<div class="a t" style="left:641.5px;width:400px;text-align:right;top:742.27px;font-size:15.2px;line-height:15.2px;font-weight:bold;font-family:'Liberation Serif',serif;color:#000;">0.0</div>
<div class="a t" style="left:725px;width:400px;text-align:right;top:742.27px;font-size:15.2px;line-height:15.2px;font-weight:bold;font-family:'Liberation Serif',serif;color:#000;">0.0</div>
<div class="a t" style="left:809.5px;width:400px;text-align:right;top:742.27px;font-size:15.2px;line-height:15.2px;font-weight:bold;font-family:'Liberation Serif',serif;color:#000;">0.0</div>
<!-- END PAGE CONTENT -->
<!-- sidebar -->
<div class="a" style="left:40px;top:80px;width:1px;height:686px;background:#6e6e6e"></div>
<div class="a" style="left:41px;top:80px;width:1px;height:686px;background:#000"></div>
<div class="a" style="left:51px;top:80px;width:1px;height:686px;background:#262626"></div>
<div class="a" style="left:52px;top:80px;width:1285px;height:5px;background:linear-gradient(#a8a8a8,#fff)"></div>
<svg class="a" style="left:9px;top:93px" width="20" height="24" viewBox="0 0 20 24">
 <path d="M1.5 3.5 H9 V20.5 H1.5 Z" fill="#a8a8a8" stroke="#888" stroke-width="0.6"/>
 <path d="M3.5 1.5 H13.5 L17.5 5.5 V20.5 H3.5 Z" fill="#c8c8c8" stroke="#9a9a9a" stroke-width="0.8"/>
 <path d="M13.5 1.5 V5.5 H17.5" fill="#e8e8e8" stroke="#aaa" stroke-width="0.6"/>
 <path d="M6 8.5 H15 M6 10.5 H15 M6 12.5 H15 M6 14.5 H15 M6 16.5 H15" stroke="#9a9a9a" stroke-width="0.7"/>
</svg>
<svg class="a" style="left:9px;top:136px" width="20" height="24" viewBox="0 0 20 24">
 <path d="M1.5 3.5 H13.5 L17.5 7.5 V22.5 H1.5 Z" fill="#c4c8cc" stroke="#7a8a9a" stroke-width="0.8"/>
 <path d="M13.5 3.5 V7.5 H17.5" fill="#e8e8e8" stroke="#aaa" stroke-width="0.6"/>
 <path d="M10 10.5 H15 M10 12.5 H15 M10 14.5 H15 M10 16.5 H15" stroke="#8a949e" stroke-width="0.7"/>
 <path d="M1.5 1.5 H8.5 V17 L5 13.5 L1.5 17 Z" fill="#4a80b0" stroke="#2c5a84" stroke-width="0.6"/>
</svg>
<svg class="a" style="left:7px;top:692px" width="26" height="21" viewBox="0 0 26 21">
 <defs><linearGradient id="gb" x1="0" y1="0" x2="0" y2="1"><stop offset="0" stop-color="#f4d070"/><stop offset="1" stop-color="#c89420"/></linearGradient></defs>
 <path d="M3 1 H13.5 Q15.5 1 15.5 3 V7.5 Q15.5 9.5 13.5 9.5 H8 L4.5 13.5 L5 9.5 H3 Q1 9.5 1 7.5 V3 Q1 1 3 1 Z" fill="url(#gb)" stroke="#c07810" stroke-width="0.7"/>
 <path d="M3.5 4 H9 M3.5 6 H7" stroke="#8a5a10" stroke-width="0.8"/>
 <path d="M10.5 4.5 H22.5 Q24.5 4.5 24.5 6.5 V12 Q24.5 14 22.5 14 H16 L12.5 18.5 L13 14 H10.5 Q8.5 14 8.5 12 V6.5 Q8.5 4.5 10.5 4.5 Z" fill="url(#gb)" stroke="#c07810" stroke-width="0.7"/>
 <path d="M12.5 8.5 H20.5 M12.5 10.6 H20.5" stroke="#7a4a08" stroke-width="0.9"/>
</svg>
<svg class="a" style="left:0;top:724px" width="40" height="40" viewBox="0 0 40 40">
 <g transform="translate(19 20.3) rotate(45) scale(1.12 1) translate(-4 -14.5)">
 <path d="M2 10 V22 A2 2 0 0 0 6 22 V4 A3 3 0 0 0 0 4 V24 A4 4 0 0 0 8 24 V8" fill="none" stroke="#484848" stroke-width="3" stroke-linecap="round"/>
 <path d="M2 10 V22 A2 2 0 0 0 6 22 V4 A3 3 0 0 0 0 4 V24 A4 4 0 0 0 8 24 V8" fill="none" stroke="#b4b4b4" stroke-width="1.8" stroke-linecap="round"/>
 </g>
</svg>
<!-- scrollbar -->
<div class="a" style="left:1347px;top:80px;width:1px;height:686px;background:#f8f8f8"></div>
<svg class="a" style="left:1352px;top:86px" width="9" height="6" viewBox="0 0 9 6"><path d="M0.8 5 L4.5 1 L8.2 5 Z" fill="#303030"/></svg>
<svg class="a" style="left:1352px;top:757px" width="9" height="6" viewBox="0 0 9 6"><path d="M1 1.5 L4.5 5 L8 1.5 Z" fill="#404040"/></svg>
<div class="a" style="left:1348px;top:121px;width:14px;height:127px;border:1px solid #9a9a9a;border-radius:2px;background:linear-gradient(90deg,#f4f4f4,#e8e8e8 50%,#d4d4d4)"></div>
<div class="a" style="left:1352px;top:181px;width:7px;height:1px;background:#555"></div>
<div class="a" style="left:1352px;top:184px;width:7px;height:1px;background:#555"></div>
<div class="a" style="left:1352px;top:187px;width:7px;height:1px;background:#555"></div>
<!-- bottom strip -->
<div class="a" style="left:0;top:766px;width:1364px;height:1px;background:#566676"></div><div class="a" style="left:0;top:767px;width:1364px;height:1px;background:#cddcea"></div><div class="a" style="left:243px;top:767px;width:43px;height:1px;background:#fff;border-left:1px solid #777;border-right:1px solid #777"></div><div class="a" style="left:289px;top:767px;width:43px;height:1px;background:#fff;border-left:1px solid #777;border-right:1px solid #777"></div>
</body></html>
